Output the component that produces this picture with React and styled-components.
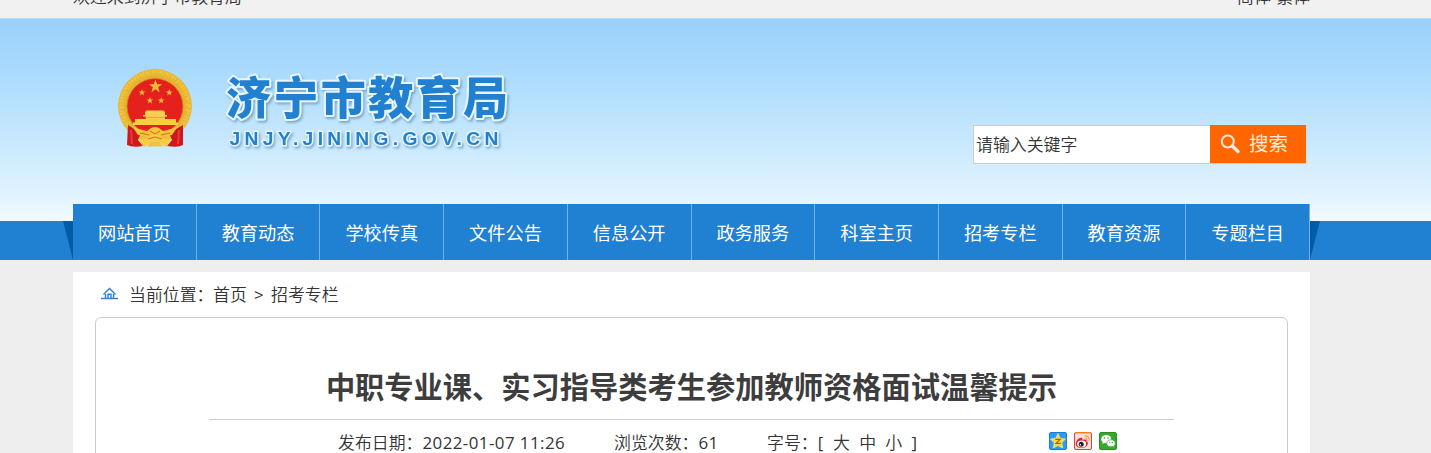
import React from 'react';
import styled, { createGlobalStyle } from 'styled-components';


const GlobalStyle = createGlobalStyle`
  * {
    box-sizing: border-box;
  }
  body {
    margin: 0;
    height: 453px;
    overflow: hidden;
    background-color: #eeeeee;
    color: #333;
    font-family: "Open Sans", "Noto Sans CJK SC", sans-serif;
    font-size: 16.9px;
    font-weight: 350;
  }
`

const Page = styled.div`
  height: 453px;
  overflow: hidden;
`

const Wrapper = styled.div`
  width: 1237px;
  margin-left: 73px;
`

//============================  Top bar ===================//

const TopBar = styled.div`
  height: 19px;
  overflow: hidden;
  background-color: #f1f1f1;
  border-bottom: 1px solid #b5dcf5;
`

const TopRow = styled(Wrapper)`
  display: flex;
  justify-content: space-between;
  height: 36px;
  margin-top: -21px;
  line-height: 36px;
`

const TopText = styled.span`
  white-space: pre;
  word-spacing: 1px;
`

//============================  Header ===================//

const Header = styled.div`
  height: 241px;
  background: linear-gradient(#9ad1fb 0, #a9dafd 50px, #c9e9fe 125px, #e0f3fe 175px, #f3faff 202px, #2080d2 202px);
`

const HeaderRow = styled(Wrapper)`
  display: flex;
  justify-content: space-between;
  height: 185px;
  padding: 40px 4px 0 35px;
`

const Logo = styled.svg`
  width: 420px;
  height: 110px;
`

const SearchForm = styled.div`
  display: flex;
  width: 333px;
  height: 39px;
  margin-top: 66px;
  border: 1px solid #ccc;
  background-color: #fff;
`

const SearchInput = styled.div`
  flex: 1;
  padding-left: 2px;
  line-height: 37px;
`

const SearchButton = styled.div`
  display: flex;
  align-items: center;
  width: 96px;
  height: 38px;
  margin: -1px -1px 0 0;
  padding-left: 10px;
  gap: 8px;
  background-color: #ff6600;
  color: #ffeadb;
  font-size: 19.5px;
  font-weight: 400;
  line-height: 38px;
`

const SearchText = styled.span`
  height: 38px;
`

const Nav = styled.div`
  display: flex;
  justify-content: center;
  width: 1257px;
  margin-left: 63px;
`

const Fold = styled.div`
  width: 10px;
  height: 39px;
  margin-top: 17px;
  background-color: #005ca8;
  clip-path: ${props => props.side === "left" ? "polygon(0 0, 100% 0, 100% 100%)" : "polygon(0 0, 100% 0, 0 100%)"};
`

const NavList = styled.div`
  display: flex;
  width: 1237px;
  height: 56px;
  background-color: #2080d2;
`

const NavItem = styled.div`
  flex: 1;
  border-right: 1px solid #6bb3f1;
  color: white;
  font-size: 18.2px;
  font-weight: 400;
  line-height: 58px;
  text-align: center;
`

//============================  Content ===================//

const Main = styled(Wrapper)`
  height: 200px;
  margin-top: 12px;
  padding: 0 22px;
  background-color: #fff;
`

const Position = styled.div`
  display: flex;
  align-items: center;
  height: 45px;
  padding-left: 6px;
`

const HomeIcon = styled.svg`
  width: 17px;
  height: 13px;
  margin: -2px 11px 0 0;
`

const PositionText = styled.span`
  width: ${props => props.width};
  line-height: 45px;
  white-space: nowrap;
`

const Article = styled.div`
  height: 180px;
  padding: 0 113px;
  border: 1px solid #ccc;
  border-radius: 6px;
`

const Title = styled.h1`
  height: 102px;
  margin: 0;
  padding-top: 47px;
  border-bottom: 1px solid #ccc;
  color: #3d3d3d;
  font-size: 29.25px;
  font-weight: 700;
  line-height: 44px;
  text-align: center;
  white-space: nowrap;
`

const Info = styled.div`
  display: flex;
  height: 46px;
  padding-left: 129px;
  line-height: 46px;
`

const InfoItem = styled.span`
  width: ${props => props.width};
  white-space: pre;
`

const Digits = styled.span`
  font-weight: 400;
  letter-spacing: 0.44px;
`

const Sizes = styled.span`
  display: inline-flex;
  gap: 9.3px;
`

const Share = styled.div`
  display: flex;
  gap: 7px;
  padding-top: 12px;
`

const ShareIcon = styled.svg`
  width: 18px;
  height: 18px;
`

const menus = ["网站首页", "教育动态", "学校传真", "文件公告", "信息公开", "政务服务", "科室主页", "招考专栏", "教育资源", "专题栏目"]

const STAR = "M0 -1 L.24 -.31 L.95 -.31 L.38 .12 L.59 .81 L0 .4 L-.59 .81 L-.38 .12 L-.95 -.31 L-.24 -.31Z"

const Emblem = () => (
  <g>
    <circle cx="47" cy="46" r="36.9" fill="#e6b232"/>
    <circle cx="47" cy="46" r="33.5" fill="none" stroke="#efc33e" strokeWidth="5" strokeDasharray="2 1 3 .6"/>
    <circle cx="47" cy="46" r="32" fill="none" stroke="#e3ac2c" strokeWidth=".8" strokeDasharray="3 2"/>
    <circle cx="47" cy="46.5" r="28" fill="#e5211d" stroke="#c98a1c" strokeWidth=".8"/>
    <path d="M20 65 L33 73 L30 80 L35 86 Q25 88 19 85Z M75 65 L61 73 L64 80 L59 86 Q70 88 75 85Z" fill="#cf181c"/>
    <path d="M23 70 L24 84 M71 70 L70 84" stroke="#eb3a34" strokeWidth="2"/>
    <g fill="#f0b93a">
      <path d={STAR} transform="translate(47.5 26.5) scale(7)"/>
      <path d={STAR} transform="translate(34 32.5) scale(3.6)"/>
      <path d={STAR} transform="translate(61.3 32.5) scale(3.6)"/>
      <path d={STAR} transform="translate(42 40.5) scale(3.6)"/>
      <path d={STAR} transform="translate(53.2 40.5) scale(3.6)"/>
    </g>
    <path d="M37 52 L38.5 50.5 H55.5 L57 52 V55 H59 V56.5 H57 V59 H38 V56.5 H35 V55 H37Z" fill="#f8cf50"/>
    <path d="M27 59 H68 V62.5 H70 V65 H25 V62.5 H27Z" fill="#f6ce44"/>
    <path d="M37 57.5 H57" stroke="#e79f2b" strokeWidth=".8"/>
    <path d="M24 66 Q31 70 39 71 L43 68 Q47 66 51 68 L55 71 Q63 70 70 66 L64 75 L54 77 L47 80 L40 77 L30 75Z" fill="#f3c53b"/>
    <path d="M30 79 Q36 80 39 78 Q47 72 55 78 Q58 80 64 79 L58 87 L51 83 H43 L36 87Z" fill="#f5cd45"/>
    <path d="M39 86.5 L43 82 H51 L55 86.5Z" fill="#efc044"/>
    <path d="M32 73 L41 75 M62 73 L53 75 M42 71 L47 74 L52 71 M40 79 L47 77 L54 79" stroke="#d4601f" strokeWidth=".9" fill="none"/>
  </g>
)

const Shares = () => (
  <Share>
    <ShareIcon viewBox="0 0 18 18">
      <rect x=".5" y=".5" width="17" height="17" rx="1.5" fill="#2d9cf0" stroke="#197ed0"/>
      <path d="M9 1.5 L11.3 6.3 L16.5 7 L12.8 10.7 L13.7 16 L9 13.5 L4.3 16 L5.2 10.7 L1.5 7 L6.7 6.3Z" fill="#ffd83c" stroke="#fff09b" strokeWidth=".6"/>
      <path d="M6.3 7.4 H11.2 L7 11.3 H11.8" fill="none" stroke="#9a6a0c" strokeWidth="1.2"/>
    </ShareIcon>
    <ShareIcon viewBox="0 0 18 18">
      <rect x=".5" y=".5" width="17" height="17" rx="1.5" fill="#f5dfdb" stroke="#d9413c"/>
      <path d="M1 .7 H17" stroke="#ff7a18" strokeWidth="1.4"/>
      <path d="M1.8 12 C1.8 8 6 4.8 8 6 C9 6.8 8 8 8.5 8 C12 6.8 13 8 12.3 9.5 C15 10.5 14 13 12 14.6 C8 17.5 2 16 1.8 12Z" fill="#e1212a"/>
      <ellipse cx="7.6" cy="12" rx="4.5" ry="3.4" fill="#fff"/>
      <circle cx="7.2" cy="12.3" r="2.5" fill="#222"/>
      <circle cx="6.4" cy="12.7" r=".8" fill="#fff"/>
      <path d="M10.5 4 Q15.5 3.5 15.2 9 M11 6.2 Q13.4 6 13 8.5" fill="none" stroke="#f6a33b" strokeWidth="1.2"/>
    </ShareIcon>
    <ShareIcon viewBox="0 0 18 18">
      <rect x=".5" y=".5" width="17" height="17" rx="1.5" fill="#35a92e" stroke="#24911f"/>
      <path d="M4 9.5 L3.3 12 L6 10.5Z M13 13 L15 15.5 L14.5 12Z" fill="#fff"/>
      <ellipse cx="7.2" cy="7.2" rx="5" ry="4.1" fill="#fff"/>
      <ellipse cx="12" cy="11.3" rx="4.2" ry="3.5" fill="#fff" stroke="#35a92e" strokeWidth=".7"/>
      <g fill="#35a92e">
        <circle cx="5.5" cy="6" r=".8"/>
        <circle cx="9" cy="6" r=".8"/>
        <circle cx="10.7" cy="10.4" r=".6"/>
        <circle cx="13.3" cy="10.4" r=".6"/>
      </g>
    </ShareIcon>
  </Share>
)


export default function App() {
  return (
    <Page>
      <GlobalStyle/>
      <TopBar>
        <TopRow>
          <TopText>欢迎来到济宁市教育局</TopText>
          <TopText>简体 繁体</TopText>
        </TopRow>
      </TopBar>

      <Header>
        <HeaderRow>
          <Logo viewBox="0 0 420 110">
            <defs>
              <filter id="shade" x="-5%" y="-10%" width="110%" height="130%">
                <feDropShadow dx="1.5" dy="2" stdDeviation="1.3" floodColor="#4a7c9e" floodOpacity=".55"/>
              </filter>
            </defs>
            <g transform="translate(0 1)">
              <Emblem/>
            </g>
            <g fill="#2280d0" stroke="#e6f5ff" strokeLinejoin="round" paintOrder="stroke" filter="url(#shade)">
              <text x="118" y="55.5" fontSize="45" fontWeight="900" fontFamily="Noto Sans CJK SC" strokeWidth="4" letterSpacing="2.4">济宁市教育局</text>
              <text x="121.5" y="86" fontSize="19.2" fontWeight="700" fontFamily="Liberation Sans" strokeWidth="3" letterSpacing="4.38">JNJY.JINING.GOV.CN</text>
            </g>
          </Logo>
          <SearchForm>
            <SearchInput>请输入关键字</SearchInput>
            <SearchButton>
              <svg width="21" height="20" viewBox="0 0 21 20" fill="none" stroke="#ffeadb">
                <circle cx="7.8" cy="7.5" r="6" strokeWidth="2"/>
                <path d="M12.3 12 L18 17.5" strokeWidth="3.4" strokeLinecap="round"/>
              </svg>
              <SearchText>搜索</SearchText>
            </SearchButton>
          </SearchForm>
        </HeaderRow>
        <Nav>
          <Fold side="left"/>
          <NavList>
            {menus.map(menu => <NavItem key={menu}>{menu}</NavItem>)}
          </NavList>
          <Fold side="right"/>
        </Nav>
      </Header>

      <Main>
        <Position>
          <HomeIcon viewBox="0 0 17 13" fill="none" stroke="#2b7fd0" strokeWidth="1.4">
            <path d="M2.5 7.5 L8.5 1.5 L14.5 7.5"/>
            <path d="M4.5 7 V11 M12.5 7 V11"/>
            <path d="M7 11 V7.2 H10 V11"/>
            <path d="M0 11.5 H17"/>
          </HomeIcon>
          <PositionText width="84px">当前位置：</PositionText>
          <PositionText width="41px">首页</PositionText>
          <PositionText width="17px"><Digits>&gt;</Digits></PositionText>
          <PositionText>招考专栏</PositionText>
        </Position>

        <Article>
          <Title>中职专业课、实习指导类考生参加教师资格面试温馨提示</Title>
          <Info>
            <InfoItem width="276px">发布日期：<Digits>2022-01-07 11:26</Digits></InfoItem>
            <InfoItem width="153px">浏览次数：<Digits>61</Digits></InfoItem>
            <InfoItem width="282px">
              字号：<Sizes><Digits>[</Digits><span>大</span><span>中</span><span>小</span><Digits>]</Digits></Sizes>
            </InfoItem>
            <Shares/>
          </Info>
        </Article>
      </Main>
    </Page>
  )
}
